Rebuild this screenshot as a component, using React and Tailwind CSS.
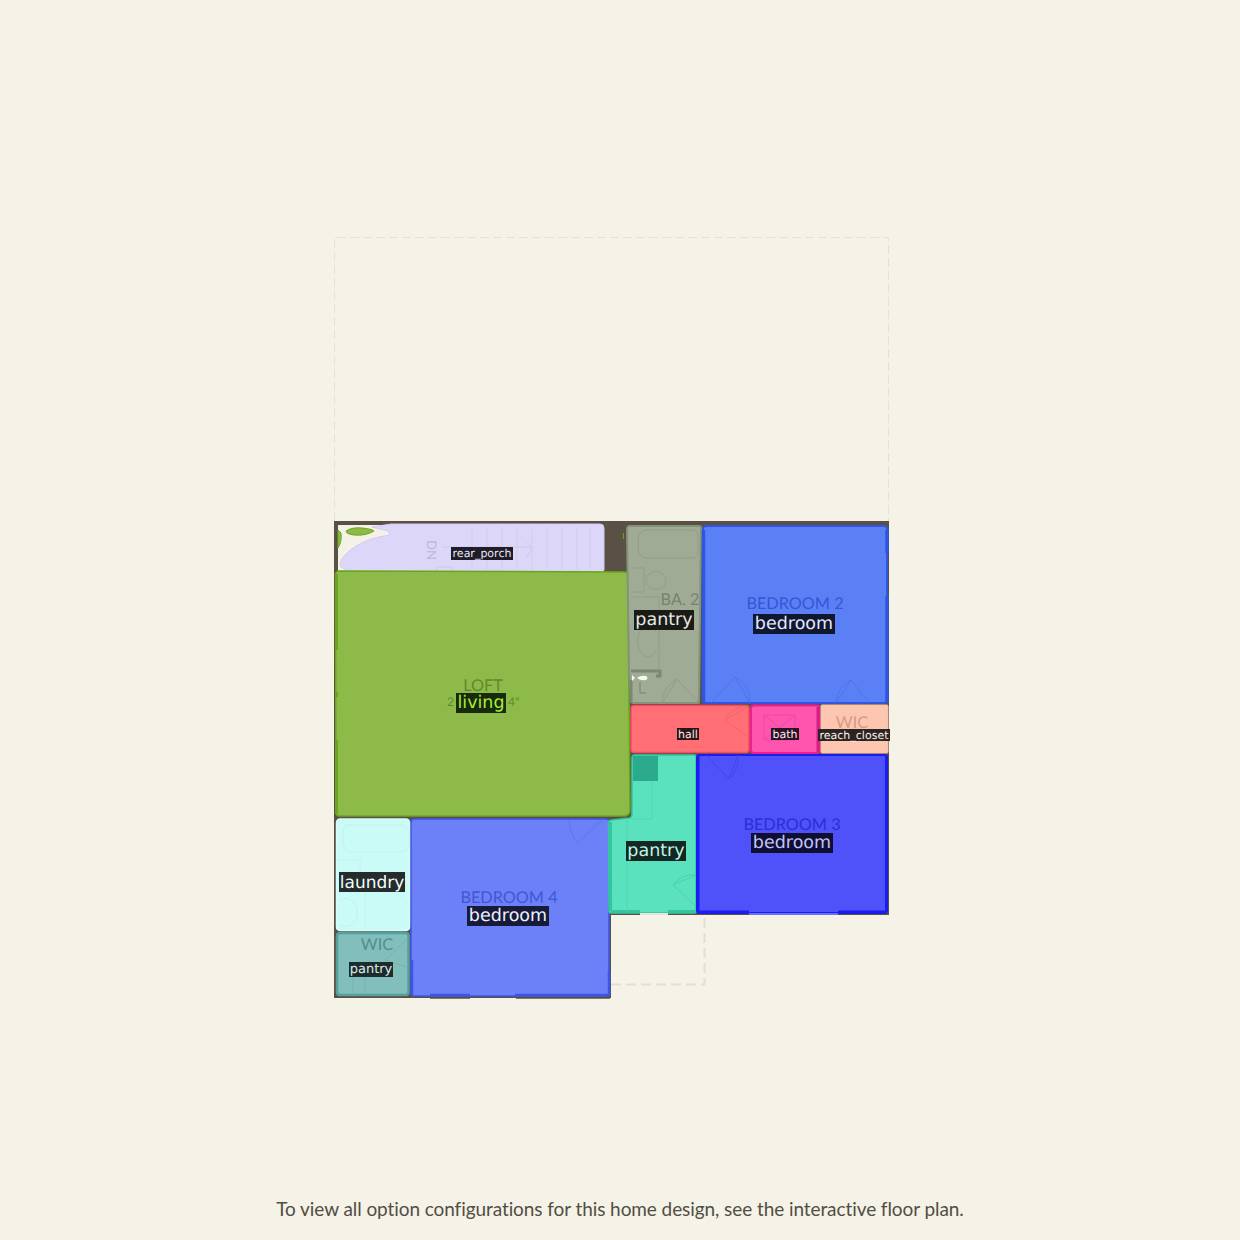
const box = (x0, y0, x1, y1, r = 3) =>
  `M${x0 + r} ${y0} H${x1 - r} Q${x1} ${y0} ${x1} ${y0 + r} V${y1 - r} Q${x1} ${y1} ${x1 - r} ${y1} H${x0 + r} Q${x0} ${y1} ${x0} ${y1 - r} V${y0 + r} Q${x0} ${y0} ${x0 + r} ${y0} Z`;

const rooms = [
  { d: 'M340 571 L624 572 Q628 572 628 576 L630 810 Q630 815 625 816 L339 816 Q336 816 336 812 L335.500 574 Q336 571 340 571 Z', fill: '#8dba48', stroke: '#6aa61c', width: 1.5 },
  { d: 'M630 526 L699 526 Q701 526 701 528 L699 701 Q699 703 697 703 L633 703 Q631 703 631 700 L629 672 L627 530 Q627 526 630 526 Z', fill: '#9fab94', stroke: '#84937a', width: 2 },
  { d: box(703, 526, 887, 703), fill: '#5b80f6', stroke: '#2f56e2', width: 2 },
  { d: box(631, 705.5, 749, 752.5), fill: '#ff6f75', stroke: '#ff4763', width: 1.5 },
  { d: box(751, 705.5, 819.5, 753), fill: '#ff55ae', stroke: '#ee2090', width: 2 },
  { d: box(821, 705, 888, 753, 1), fill: '#fdc6b1', stroke: '#f6c0ab', width: 1 },
  { d: box(411, 819, 609, 996), fill: '#6c80f7', stroke: '#3d55ea', width: 1.5 },
  { d: 'M635 755 L694 755 Q696 755 696 757 L696 911 Q696 913 694 913 L611 913 Q609 913 609 911 L608.500 823 Q608.500 820 612 820 L630 818 Q632 817 632 814 L632 758 Q632 755 635 755 Z', fill: '#59e2bd', stroke: '#2fc9a3', width: 1.5 },
  { d: box(697, 755, 887, 913), fill: '#4f52f8', stroke: '#1a1cf0', width: 2 },
  { d: box(336.5, 819, 409.5, 930.5, 4), fill: '#cbfbf7', stroke: '#d8fcf9', width: 1.5 },
  { d: box(337, 933, 408.5, 995), fill: '#82bfbc', stroke: '#55a09d', width: 2.5 },
];

// faint fixtures and door swings that show through the room colours
const fixtures = [
  { d: 'M646 530 H692 Q698 530 698 536 V552 Q698 558 692 558 H646 Q638 558 638 544 Q638 530 646 530 Z', stroke: '#8b9a81' },
  { d: 'M631 568 H644 V592 H631 M646 580 A10 9 0 1 1 646 581', stroke: '#8b9a81' },
  { d: 'M631 597 H659 V670 M656 632 A10 16 0 1 0 656 650', stroke: '#8b9a81' },
  { d: 'M662 704 L677 679 L700 704 M662 704 A28 28 0 0 1 677 679', stroke: '#8b9a81' },
  { d: 'M711 703 L735 677 L750 703 A26 26 0 0 0 735 677', stroke: '#4a6de6' },
  { d: 'M836 703 L851 680 L869 703 M836 703 A26 26 0 0 1 851 680', stroke: '#4a6de6' },
  { d: 'M749 706 L725 720 L749 738 M749 706 A26 26 0 0 0 725 720', stroke: '#ef5f68' },
  { d: 'M764 715 H795 V740 H764 Z M764 715 L795 740 M795 715 L764 740', stroke: '#dc47a0' },
  { d: 'M706 755 L729 779 L738 755 A26 26 0 0 1 729 779', stroke: '#3f42e6' },
  { d: 'M696 875 L673 885 L696 906 M696 875 A26 26 0 0 0 673 885', stroke: '#45c9a6' },
  { d: 'M652 782 V819 H632 M627 820 V912', stroke: '#4bd3af' },
  { d: 'M569 819 Q570 835 578 843 L603 819', stroke: '#5a6ee6' },
  { d: 'M346 825 H398 Q409 825 409 835 V845 Q409 852 398 852 H350 Q343 852 343 838 Q343 825 346 825 Z', stroke: '#bfeeea' },
  { d: 'M337 860 H360 V878 M340 900 A12 14 0 1 1 340 925 M365 890 V930 M385 882 L409 906', stroke: '#bfeeea' },
  { d: 'M409 937 L385 960 L409 968 M353 995 V966 M365 995 V966', stroke: '#70aeab' },
];

const stairLines = [472, 487, 502, 517, 532, 547, 562, 577, 590];

const floorLabels = [
  { text: 'BEDROOM 2', x: 795, y: 609, fill: '#3556d8' },
  { text: 'BEDROOM 3', x: 792, y: 830, fill: '#2a2fd6' },
  { text: 'BEDROOM 4', x: 509, y: 903, fill: '#4257d6' },
  { text: 'BA. 2', x: 680, y: 605, fill: '#76836e' },
  { text: 'LOFT', x: 483, y: 691, fill: '#5f8a2e' },
  { text: 'WIC', x: 852, y: 728, fill: '#d59a86' },
  { text: 'WIC', x: 377, y: 950, fill: '#4f8f8d' },
];

const labels = [
  { id: 'porch', text: 'rear_porch', box: 'left-[451px] top-[547px] w-[62px] h-[13px] text-[11px] text-[#e9e6f8] bg-[#1f1d26]' },
  { id: 'ba2', text: 'pantry', box: 'left-[634px] top-[610px] w-[60px] h-[20px] pt-[2px] text-[17.5px] text-[#e6e9e1] bg-[#1a1b17]' },
  { id: 'bed2', text: 'bedroom', box: 'left-[753px] top-[614px] w-[82px] h-[20px] pt-[2px] text-[17.5px] text-[#e2e8fc] bg-[#111730]' },
  { id: 'loft', text: 'living', box: 'left-[456px] top-[693px] w-[50px] h-[20px] pt-[2px] text-[17.5px] text-[#a6ee3c] bg-[#1a2a0c]' },
  { id: 'hall', text: 'hall', box: 'left-[677px] top-[728px] w-[22px] h-[12px] text-[11px] text-[#ffe8e8] bg-[#2a1616]' },
  { id: 'bath', text: 'bath', box: 'left-[771px] top-[728px] w-[28px] h-[12px] text-[11px] text-[#ffe6f2] bg-[#2b1422]' },
  { id: 'wic1', text: 'reach_closet', box: 'left-[818px] top-[729px] w-[72px] h-[12px] text-[11px] text-[#fff1ec] bg-[#2a2422]' },
  { id: 'laundry', text: 'laundry', box: 'left-[339px] top-[872px] w-[66px] h-[20px] pt-[2px] text-[17px] text-[#f2fffd] bg-[#242c2c]' },
  { id: 'bed4', text: 'bedroom', box: 'left-[467px] top-[906px] w-[82px] h-[20px] pt-[2px] text-[17.5px] text-[#eef0fe] bg-[#171b3a]' },
  { id: 'wic2', text: 'pantry', box: 'left-[349px] top-[962px] w-[44px] h-[15px] text-[13px] text-[#d8eeed] bg-[#1e2b2b]' },
  { id: 'teal', text: 'pantry', box: 'left-[626px] top-[841px] w-[60px] h-[20px] pt-[2px] text-[17.5px] text-[#bdf5e5] bg-[#132822]' },
  { id: 'bed3', text: 'bedroom', box: 'left-[751px] top-[833px] w-[82px] h-[20px] pt-[2px] text-[17.5px] text-[#c2c4f6] bg-[#0e0f33]' },
];

function FloorPlan() {
  return (
    <svg className="absolute inset-0" width="1240" height="1190" viewBox="0 0 1240 1190">
      {/* dashed outlines of the floor below */}
      <path d="M334.500 521 V237.500 H888.500 V521" fill="none" stroke="#e4e2d8" strokeWidth="1" strokeDasharray="9 4" />
      <path d="M611 984.500 H704.500 V915" fill="none" stroke="#e2e0d6" strokeWidth="2" strokeDasharray="10 5" />

      {/* walls */}
      <path d="M334 521 H889 V915 H611 V998 H334 Z" fill="#5a5045" />
      <path d="M338 525 H400 V572 H338 Z" fill="#f4f2e6" />

      {/* rear porch */}
      <path
        d="M391 524 L600 524 Q604 524 604 528 L604 569 Q604 573 600 572 L368 573 Q345 572 340 566 Q340 556 356 546 Q368 538 390 535 L388 531 L372 527 Z"
        fill="#dcd6f8"
        stroke="#d2cbf5"
      />
      {stairLines.map((x) => (
        <path key={x} d={`M${x} 527 V570`} stroke="#d2cbef" />
      ))}
      <path d="M442 547 H527 L532 548 L527 557 M527 542 L532 548" fill="none" stroke="#cfc8ec" />
      <path d="M437 572 V567 H452 V572" fill="none" stroke="#cfc8ec" />
      <path d="M346 531 Q352 527 362 528 Q372 529 374 531 Q366 536 354 535 Q346 534 346 531 Z" fill="#8dba48" stroke="#6aa61c" />
      <path d="M338 530 L341 533 Q342 542 338 548 Z" fill="#8dba48" stroke="#6aa61c" />
      <path d="M623.500 533 V539" stroke="#6aa61c" />
      <text x="432" y="550" textAnchor="middle" transform="rotate(90 432 550)" dy="5" fontSize="13" fill="#bcb5de" fontFamily="Lato, sans-serif">
        DN
      </text>

      {rooms.map((room) => (
        <path key={room.d} d={room.d} fill={room.fill} stroke={room.stroke} strokeWidth={room.width} strokeLinejoin="round" />
      ))}

      {/* heavier wall chunks showing through the overlay */}
      <g fill="none">
        <path d="M336.500 574 V650 M336.500 740 V814 M336.500 692 V697" stroke="#6aa61c" strokeWidth="3" />
        <path d="M703.500 530 V702 M887 530 V553 M887 596 V702" stroke="#2f56e2" strokeWidth="3.500" />
        <path d="M698 756 V912 M886.500 756 V912 M697 912 H749 M838 912 H887" stroke="#1a1cf0" strokeWidth="3" />
        <path d="M818 707 V752" stroke="#d61f86" strokeWidth="3" />
        <path d="M609 970 V995 H515 M470 995 H430 M412 960 V995" stroke="#3d55ea" strokeWidth="2.500" />
        <path d="M610.500 822 V911 M611 911.500 H640 M668 911.500 H695" stroke="#35c4a2" strokeWidth="3" />
        <path d="M430 998 H470 M516 998 H610" stroke="#5a5045" strokeWidth="1.500" />
        <path d="M631 671 H660 V676 H656 M631 703 V680" stroke="#7a8a72" strokeWidth="3" />
        <path d="M640 682 V693 H646" stroke="#76836e" />
        <path d="M640 914 H668" stroke="#e8e5d8" strokeWidth="2" />
        <path d="M749 914 H838" stroke="#6c6ff8" strokeWidth="2" />
      </g>
      <path d="M633 756 H658 V781 H633 Z" fill="#2bab8c" />
      <path d="M635 678 L632 675 V681 Z M637 678 Q641 675 646 676 Q649 678 646 680 Q641 681 637 678 Z" fill="#f8f7f0" />

      {fixtures.map((item) => (
        <path key={item.d} d={item.d} fill="none" stroke={item.stroke} strokeWidth="1" opacity="0.7" />
      ))}

      <text x="447" y="706" fontSize="12" fill="#5f8a2e" fontFamily="Lato, sans-serif">2</text>
      <text x="508" y="706" fontSize="12" fill="#5f8a2e" fontFamily="Lato, sans-serif">4"</text>
      {floorLabels.map((label) => (
        <text key={label.text + label.x} x={label.x} y={label.y} textAnchor="middle" fontSize="16.300" fill={label.fill} fontFamily="Lato, sans-serif">
          {label.text}
        </text>
      ))}
    </svg>
  );
}

export default function App() {
  return (
    <div className="w-full h-[1240px] bg-[#f5f2e7] flex flex-col overflow-hidden">
      <div className="relative w-[1240px] h-[1190px] shrink-0 font-['DejaVu_Sans'] [text-rendering:geometricPrecision]">
        <FloorPlan />
        {labels.map((label) => (
          <span key={label.id} className={`absolute flex items-center justify-center whitespace-nowrap leading-none ${label.box}`}>
            {label.text}
          </span>
        ))}
      </div>
      <p className="mt-[7px] text-center text-[19px] tracking-[-0.08px] leading-6 text-[#524d44] font-['Lato',sans-serif]">
        To view all option configurations for this home design, see the interactive floor plan.
      </p>
    </div>
  );
}
